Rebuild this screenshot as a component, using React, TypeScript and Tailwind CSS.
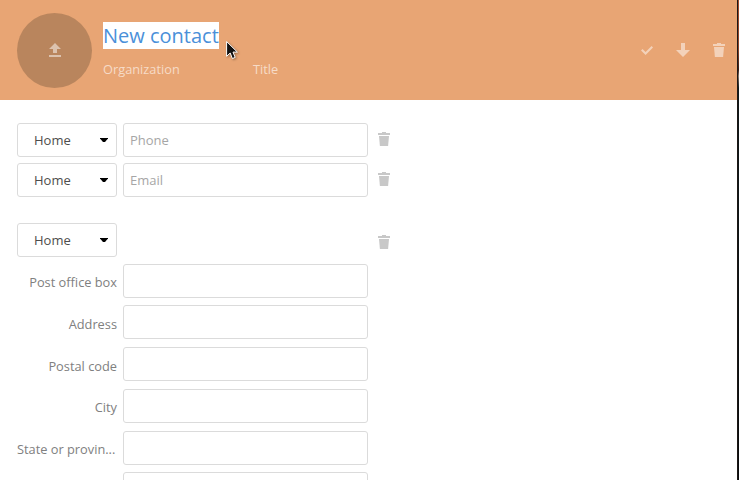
type IconProps = { className?: string };

function TrashIcon({ className = "" }: IconProps) {
  return (
    <svg className={className} width="12" height="14" viewBox="0 0 12 14" fill="currentColor">
      <path d="M4 0h4v1h4v2H0V1h4z" />
      <path d="M1 4h10l-.9 10H1.9z" />
    </svg>
  );
}

function CheckIcon() {
  return (
    <svg width="12" height="9" viewBox="0 0 12 9" fill="currentColor">
      <path d="M10.6 0 12 1.5 4.6 9 0 4.4 1.5 2.9 4.6 6z" />
    </svg>
  );
}

function DownloadIcon() {
  return (
    <svg width="14" height="14" viewBox="0 0 14 14" fill="currentColor">
      <path d="M5 0h4v7h5l-7 7-7-7h5z" />
    </svg>
  );
}

function UploadIcon() {
  return (
    <svg width="12" height="14" viewBox="0 0 12 14" fill="currentColor">
      <path d="M6 0l6 6H8v4H4V6H0z" />
      <path d="M0 12h12v2H0z" />
    </svg>
  );
}

function Cursor() {
  return (
    <svg className="absolute left-[226px] top-[41px] drop-shadow-[1px_1px_1px_rgba(0,0,0,0.35)]" width="13" height="20" viewBox="0 0 13 20">
      <path
        d="M.6 .5v14.8l3.6-3.3 2.2 5.6 2.8-1.2-2.2-5.3h4.4z"
        fill="#111"
        stroke="#fff"
        strokeWidth="1"
      />
    </svg>
  );
}

function TypeSelect() {
  return (
    <div className="flex h-[34px] w-[100px] items-center justify-between rounded-[3px] border border-[#dbdbdb] bg-white pl-4 pr-2 text-[13px] text-[#4d4d4d]">
      <span>Home</span>
      <svg width="8" height="4" viewBox="0 0 8 4">
        <path d="M0 0h8v.6L5 4H3L0 .6z" fill="#000" />
      </svg>
    </div>
  );
}

const inputClass =
  "block h-[34px] w-[245px] rounded-[3px] border border-[#dbdbdb] bg-white px-1.5 text-[13px] text-[#555] outline-none placeholder:text-[#a6a6a6] placeholder:opacity-100";

const addressFields = [
  { label: "Post office box", spacing: "mt-[7px]", pad: "pt-[8px]" },
  { label: "Address", spacing: "mt-[7px]", pad: "pt-[9px]" },
  { label: "Postal code", spacing: "mt-[8px]", pad: "pt-[9px]" },
  { label: "City", spacing: "mt-[8px]", pad: "pt-[8px]" },
  { label: "State or provin...", spacing: "mt-[8px]", pad: "pt-[8px] pr-[2px]" },
  { label: "", spacing: "mt-[7px]", pad: "" },
];

export default function App() {
  return (
    <div className="relative flex h-[480px] w-[739px] overflow-hidden bg-white font-['Open_Sans','Noto_Sans',sans-serif] text-[12.8px] leading-[20px]">
      <main className="w-[737px] shrink-0">
        <header className="flex h-[100px] items-start bg-[#e8a574] pl-[17px] pr-3 pt-[13px]">
          <div className="flex size-[75px] items-start justify-center rounded-full bg-[#b9855d] pt-[30px] text-[#dcc2ae]">
            <UploadIcon />
          </div>
          <div className="ml-[11px] pt-[9px]">
            <h1 className="h-[27px] w-[116px] whitespace-nowrap bg-white text-[20px] leading-[27px] text-[#4a90d9]">
              New contact
            </h1>
            <div className="mt-[11px] flex leading-[18px] text-[#f6dbc7]">
              <span className="w-[150px]">Organization</span>
              <span>Title</span>
            </div>
          </div>
          <div className="ml-auto flex h-[74px] items-center text-[#f3d2ba]">
            <span className="flex pt-px">
              <CheckIcon />
            </span>
            <span className="ml-[23px] flex">
              <DownloadIcon />
            </span>
            <span className="ml-[23px] flex">
              <TrashIcon />
            </span>
          </div>
        </header>
        <section className="pl-[17px] pt-[23px]">
          <div className="flex gap-1.5">
            <TypeSelect />
            <input className={inputClass} placeholder="Phone" />
            <TrashIcon className="ml-1 mt-[9px] text-[#c8c8c8]" />
          </div>
          <div className="mt-1.5 flex gap-1.5">
            <TypeSelect />
            <input className={inputClass} placeholder="Email" />
            <TrashIcon className="ml-1 mt-[9px] text-[#c8c8c8]" />
          </div>
          <div className="mt-[26px] flex">
            <TypeSelect />
            <TrashIcon className="ml-[261px] mt-[12px] text-[#c8c8c8]" />
          </div>
          {addressFields.map((field) => (
            <div key={field.label} className={`flex gap-1.5 ${field.spacing}`}>
              <label
                className={`block h-[34px] w-[100px] text-right whitespace-nowrap text-[#808080] ${field.pad}`}
              >
                {field.label}
              </label>
              <input className={inputClass} />
            </div>
          ))}
        </section>
      </main>
      <div className="h-full w-px bg-[#1c1715]" />
      <div className="h-full w-px bg-[linear-gradient(to_bottom,#a04a2c_0px,#8a4228_50px,#3a1c16_70px,#8a7468_76px,#101a1c_88px,#0a0c0d_480px)]" />
      <Cursor />
    </div>
  );
}
